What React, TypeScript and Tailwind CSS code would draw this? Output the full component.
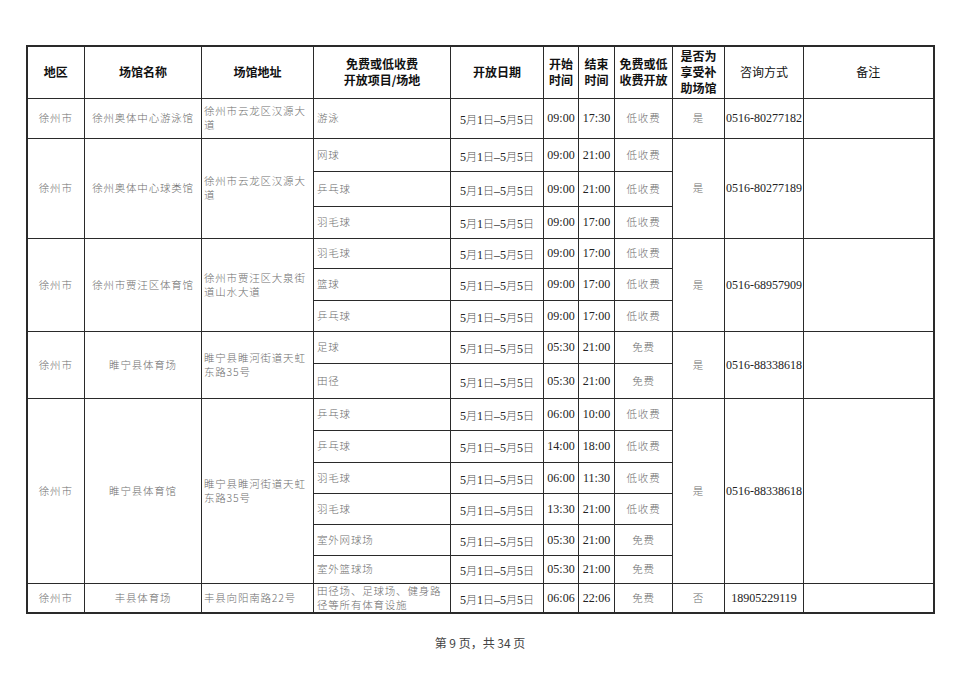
import React from 'react';

type Item = { name: string; start: string; end: string; fee: string };
type Venue = {
  area: string;
  venue: string;
  addr: string;
  items: Item[];
  subsidy: string;
  phone: string;
  heights: number[];
};

const venues: Venue[] = [
  {
    area: '徐州市',
    venue: '徐州奥体中心游泳馆',
    addr: '徐州市云龙区汉源大道',
    items: [{ name: '游泳', start: '09:00', end: '17:30', fee: '低收费' }],
    subsidy: '是',
    phone: '0516-80277182',
    heights: [40],
  },
  {
    area: '徐州市',
    venue: '徐州奥体中心球类馆',
    addr: '徐州市云龙区汉源大道',
    items: [
      { name: '网球', start: '09:00', end: '21:00', fee: '低收费' },
      { name: '乒乓球', start: '09:00', end: '21:00', fee: '低收费' },
      { name: '羽毛球', start: '09:00', end: '17:00', fee: '低收费' },
    ],
    subsidy: '是',
    phone: '0516-80277189',
    heights: [33, 35, 32],
  },
  {
    area: '徐州市',
    venue: '徐州市贾汪区体育馆',
    addr: '徐州市贾汪区大泉街道山水大道',
    items: [
      { name: '羽毛球', start: '09:00', end: '17:00', fee: '低收费' },
      { name: '篮球', start: '09:00', end: '17:00', fee: '低收费' },
      { name: '乒乓球', start: '09:00', end: '17:00', fee: '低收费' },
    ],
    subsidy: '是',
    phone: '0516-68957909',
    heights: [30, 32, 31],
  },
  {
    area: '徐州市',
    venue: '睢宁县体育场',
    addr: '睢宁县睢河街道天虹东路35号',
    items: [
      { name: '足球', start: '05:30', end: '21:00', fee: '免费' },
      { name: '田径', start: '05:30', end: '21:00', fee: '免费' },
    ],
    subsidy: '是',
    phone: '0516-88338618',
    heights: [32, 35],
  },
  {
    area: '徐州市',
    venue: '睢宁县体育馆',
    addr: '睢宁县睢河街道天虹东路35号',
    items: [
      { name: '乒乓球', start: '06:00', end: '10:00', fee: '低收费' },
      { name: '乒乓球', start: '14:00', end: '18:00', fee: '低收费' },
      { name: '羽毛球', start: '06:00', end: '11:30', fee: '低收费' },
      { name: '羽毛球', start: '13:30', end: '21:00', fee: '低收费' },
      { name: '室外网球场', start: '05:30', end: '21:00', fee: '免费' },
      { name: '室外篮球场', start: '05:30', end: '21:00', fee: '免费' },
    ],
    subsidy: '是',
    phone: '0516-88338618',
    heights: [32, 32, 31, 31, 31, 28],
  },
  {
    area: '徐州市',
    venue: '丰县体育场',
    addr: '丰县向阳南路22号',
    items: [
      { name: '田径场、足球场、健身路径等所有体育设施', start: '06:06', end: '22:06', fee: '免费' },
    ],
    subsidy: '否',
    phone: '18905229119',
    heights: [28],
  },
];

const cjk = "font-['Noto_Sans_CJK_SC',sans-serif]";
const serif = "font-['Liberation_Serif','Noto_Sans_CJK_SC',serif]";
const cell = 'border-[1.5px] border-[#2a2a2a] p-0 align-middle';
const soft = `${cjk} text-[10.5px] font-light tracking-[0.8px] text-[#6e6e6e] leading-[14px]`;
const num = `${serif} text-[12px] text-[#222]`;
const mk = `${cjk} text-[11px] font-light text-[#555]`;

function DateText() {
  return (
    <span className={num}>
      5<span className={mk}>月</span>1<span className={mk}>日</span>–5<span className={mk}>月</span>5
      <span className={mk}>日</span>
    </span>
  );
}

export default function App() {
  const head = `${cell} ${cjk} text-[12px] font-bold text-[#111] leading-[16px] text-center`;
  return (
    <div className="w-[960px] h-[679px] bg-white flex flex-col items-center">
      <div className="pt-[45px]">
        <table className="table-fixed border-collapse w-[907px] border-2 border-[#2a2a2a]">
          <colgroup>
            <col className="w-[58px]" />
            <col className="w-[117px]" />
            <col className="w-[112px]" />
            <col className="w-[137px]" />
            <col className="w-[93px]" />
            <col className="w-[35px]" />
            <col className="w-[36px]" />
            <col className="w-[58px]" />
            <col className="w-[52px]" />
            <col className="w-[79px]" />
            <col className="w-[130px]" />
          </colgroup>
          <thead>
            <tr className="h-[52px]">
              <th className={head}>地区</th>
              <th className={head}>场馆名称</th>
              <th className={head}>场馆地址</th>
              <th className={head}>
                免费或低收费
                <br />
                开放项目/场地
              </th>
              <th className={head}>开放日期</th>
              <th className={head}>
                开始
                <br />
                时间
              </th>
              <th className={head}>
                结束
                <br />
                时间
              </th>
              <th className={head}>
                免费或低
                <br />
                收费开放
              </th>
              <th className={head}>
                是否为
                <br />
                享受补
                <br />
                助场馆
              </th>
              <th className={`${head} font-normal`}>咨询方式</th>
              <th className={`${head} font-normal`}>备注</th>
            </tr>
          </thead>
          <tbody>
            {venues.map((v, vi) =>
              v.items.map((it, i) => (
                <tr key={`${vi}-${i}`} style={{ height: v.heights[i] }}>
                  {i === 0 && (
                    <>
                      <td rowSpan={v.items.length} className={`${cell} ${soft} text-center`}>
                        {v.area}
                      </td>
                      <td rowSpan={v.items.length} className={`${cell} ${soft} text-center`}>
                        {v.venue}
                      </td>
                      <td rowSpan={v.items.length} className={`${cell} ${soft} text-left px-[2px]`}>
                        {v.addr}
                      </td>
                    </>
                  )}
                  <td className={`${cell} ${soft} text-left pl-[3px] pr-[2px]`}>{it.name}</td>
                  <td className={`${cell} text-center`}>
                    <DateText />
                  </td>
                  <td className={`${cell} ${num} text-center`}>{it.start}</td>
                  <td className={`${cell} ${num} text-center`}>{it.end}</td>
                  <td className={`${cell} ${soft} text-center`}>{it.fee}</td>
                  {i === 0 && (
                    <>
                      <td rowSpan={v.items.length} className={`${cell} ${soft} text-center`}>
                        {v.subsidy}
                      </td>
                      <td rowSpan={v.items.length} className={`${cell} ${num} text-center`}>
                        {v.phone}
                      </td>
                      <td rowSpan={v.items.length} className={cell}></td>
                    </>
                  )}
                </tr>
              ))
            )}
          </tbody>
        </table>
      </div>
      <div className={`mt-[20px] ${cjk} text-[12px] text-[#444]`}>第 9 页，共 34 页</div>
    </div>
  );
}
